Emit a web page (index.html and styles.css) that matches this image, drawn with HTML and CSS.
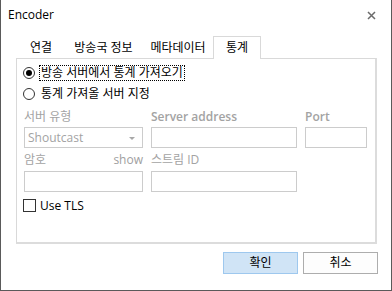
FILE: index.html
```html
<!DOCTYPE html>
<html lang="ko">
<head>
<meta charset="utf-8">
<title>Encoder</title>
<link rel="stylesheet" href="styles.css">
</head>
<body>
<div class="window">
  <div class="titlebar">
    <span class="title">Encoder</span>
    <svg class="close" width="9" height="9" viewBox="0 0 9 9"><path d="M1 1L8 8M8 1L1 8" stroke="#6b6b6b" stroke-width="1.5" fill="none"/></svg>
  </div>
  <div class="tabs">
    <div class="tab t1">연결</div>
    <div class="tab t2">방송국 정보</div>
    <div class="tab t3">메타데이터</div>
    <div class="tab t4 active">통계</div>
  </div>
  <div class="panel">
    <div class="radio-row r1"><span class="radio checked"></span><span class="rlabel focus">방송 서버에서 통계 가져오기</span></div>
    <div class="radio-row r2"><span class="radio"></span><span class="rlabel">통계 가져올 서버 지정</span></div>
    <div class="form">
      <div class="lbl l1">서버 유형</div>
      <div class="lbl l1 strong">Server address</div>
      <div class="lbl l1 strong">Port</div>
      <div class="combo"><span>Shoutcast</span><span class="arrow"></span></div>
      <div class="input"></div>
      <div class="input"></div>
      <div class="lbl l2 split"><span>암호</span><span class="show">show</span></div>
      <div class="lbl l2">스트림 ID</div>
      <div></div>
      <div class="input"></div>
      <div class="input"></div>
      <div></div>
    </div>
    <div class="check-row"><span class="checkbox"></span><span class="clabel">Use TLS</span></div>
  </div>
  <div class="buttons">
    <div class="btn primary">확인</div>
    <div class="btn">취소</div>
  </div>
</div>
</body>
</html>
```
FILE: styles.css
```css
html, body {
  margin: 0;
  padding: 0;
  background: #ffffff;
}
body {
  font-family: "Open Sans", "Noto Sans CJK KR", sans-serif;
  font-size: 12px;
  color: #000;
}
.window {
  width: 392px;
  height: 291px;
  box-sizing: border-box;
  border-left: 1px solid #5a5a5a;
  border-right: 1px solid #5a5a5a;
  border-bottom: 1px solid #5a5a5a;
  background: #fff;
}
.titlebar {
  height: 36px;
  display: flex;
  justify-content: space-between;
  align-items: flex-start;
  box-sizing: border-box;
  padding: 7px 15px 0 7px;
}
.title {
  line-height: 16px;
  font-size: 12px;
}
.close {
  margin-top: 4px;
}
.tabs {
  display: flex;
  height: 22px;
  margin-left: 15px;
  position: relative;
  z-index: 1;
}
.tab {
  box-sizing: border-box;
  text-align: center;
  line-height: 16px;
  padding-top: 4px;
  height: 22px;
}
.t1 { width: 50px; }
.t2 { width: 75px; }
.t3 { width: 74px; }
.tab.active {
  width: 48px;
  margin-left: -2px;
  height: 23px;
  border: 1px solid #d9d9d9;
  border-bottom: none;
  background: #fff;
  padding-top: 3px;
}
.panel {
  margin-left: 15px;
  width: 361px;
  height: 186px;
  box-sizing: border-box;
  border: 1px solid #d9d9d9;
  border-right: 2px solid #dcdcdc;
  border-bottom: 2px solid #dcdcdc;
  padding: 6px 0 0 6px;
}
.radio-row {
  display: flex;
  align-items: center;
  height: 16px;
}
.r2 { margin-top: 5px; }
.radio {
  width: 12px;
  height: 12px;
  box-sizing: border-box;
  border: 1px solid #333;
  border-radius: 50%;
  display: flex;
  align-items: center;
  justify-content: center;
  margin-right: 4px;
  background: #fff;
}
.radio.checked::after {
  content: "";
  width: 6px;
  height: 6px;
  border-radius: 50%;
  background: #000;
}
.rlabel {
  line-height: 14px;
  padding: 0 1px;
  border: 1px solid transparent;
}
.rlabel.focus {
  border: 1px dotted #000;
}
.form {
  display: grid;
  grid-template-columns: 119px 146px 62px;
  grid-template-rows: 25px 21px 23px 21px;
  column-gap: 8px;
  margin-left: 1px;
}
.lbl {
  color: #a3a3a3;
  line-height: 16px;
  align-self: end;
}
.l1 { padding-bottom: 2px; }
.l2 { padding-bottom: 3px; }
.strong { font-weight: 600; }
.split {
  display: flex;
  justify-content: space-between;
}
.show { color: #a0a0a0; }
.input, .combo {
  box-sizing: border-box;
  border: 1px solid #cccccc;
  background: #fff;
  height: 21px;
}
.combo {
  display: flex;
  align-items: center;
  justify-content: space-between;
  padding: 0 7px 0 3px;
  color: #a3a3a3;
}
.arrow {
  width: 0;
  height: 0;
  border-left: 3px solid transparent;
  border-right: 3px solid transparent;
  border-top: 3px solid #a8a8a8;
  margin-top: 2px;
}
.check-row {
  display: flex;
  align-items: center;
  margin-top: 7px;
  height: 13px;
}
.checkbox {
  width: 13px;
  height: 13px;
  box-sizing: border-box;
  border: 1px solid #333;
  background: #fff;
  margin-right: 4px;
}
.clabel { line-height: 16px; }
.buttons {
  display: flex;
  justify-content: flex-end;
  gap: 5px;
  padding-right: 13px;
  margin-top: 8px;
}
.btn {
  width: 75px;
  height: 22px;
  box-sizing: border-box;
  border: 1px solid #adadad;
  background: #fdfdfd;
  display: flex;
  align-items: center;
  justify-content: center;
  line-height: 16px;
}
.btn.primary {
  background: #d0e4f6;
  border-color: #9ec8ee;
}
```
